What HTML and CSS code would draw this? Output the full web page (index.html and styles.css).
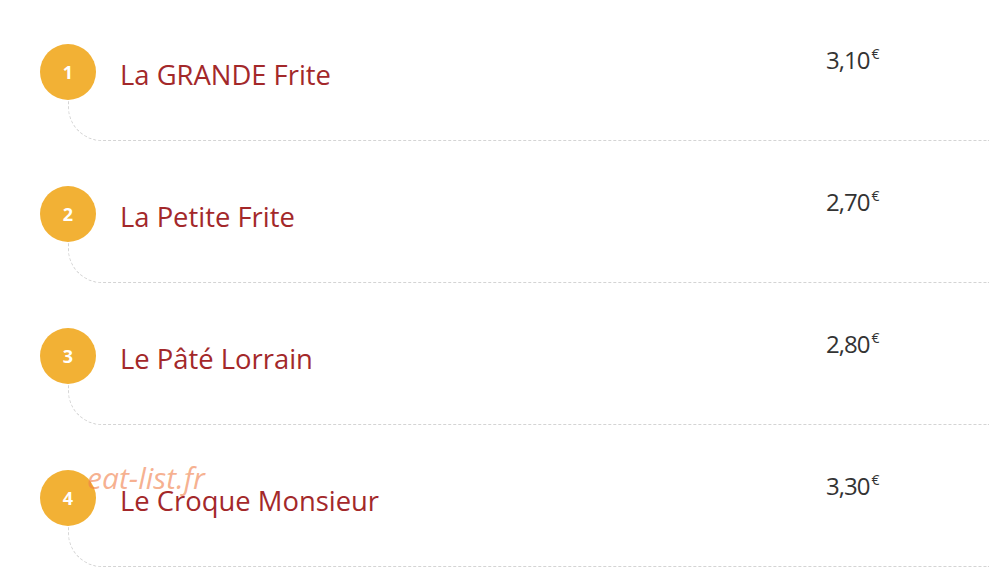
FILE: index.html
```html
<!DOCTYPE html>
<html lang="fr">
<head>
    <meta charset="UTF-8">
    <meta name="viewport" content="width=device-width, initial-scale=1.0">
    <title>Menu</title>
    <link rel="stylesheet" href="styles.css">
</head>
<body>
    <ul class="menu">
        <li class="item">
            <span class="num">1</span>
            <span class="name">La GRANDE Frite</span>
            <span class="price">3,10<sup>€</sup></span>
        </li>
        <li class="item">
            <span class="num">2</span>
            <span class="name">La Petite Frite</span>
            <span class="price">2,70<sup>€</sup></span>
        </li>
        <li class="item">
            <span class="num">3</span>
            <span class="name">Le Pâté Lorrain</span>
            <span class="price">2,80<sup>€</sup></span>
        </li>
        <li class="item">
            <span class="num">4</span>
            <span class="name">Le Croque Monsieur</span>
            <span class="price">3,30<sup>€</sup></span>
        </li>
    </ul>
    <div class="watermark">eat-list.fr</div>
</body>
</html>
```

FILE: styles.css
```css
body {
    margin: 0;
    background: #fff;
    font-family: "Open Sans", "Liberation Sans", sans-serif;
    overflow: hidden;
}
.menu {
    list-style: none;
    margin: 0;
    padding: 44px 0 0 68px;
}
.item {
    display: flex;
    align-items: flex-start;
    height: 96px;
    margin-bottom: 45px;
    border-left: 1px dashed #d4d4d4;
    border-bottom: 1px dashed #d4d4d4;
    border-bottom-left-radius: 34px;
}
.item:last-child {
    margin-bottom: 0;
}
.num {
    flex: none;
    width: 56px;
    height: 56px;
    margin-left: -29px;
    border-radius: 50%;
    background: #f2b135;
    color: #fff;
    font-size: 18px;
    font-weight: 700;
    display: flex;
    align-items: center;
    justify-content: center;
}
.name {
    flex: 1;
    margin: 13px 0 0 24px;
    font-size: 27.4px;
    line-height: 36px;
    color: #a3282a;
}
.price {
    width: 163px;
    flex: none;
    font-size: 24px;
    line-height: 32px;
    letter-spacing: -1px;
    color: #333;
}
.price sup {
    font-size: 14px;
    letter-spacing: 0;
    margin-left: 2px;
    vertical-align: 10px;
    line-height: 0;
}
.watermark {
    position: absolute;
    left: 87px;
    top: 457px;
    font-size: 30px;
    font-style: italic;
    color: rgba(240, 125, 70, 0.6);
}
```
